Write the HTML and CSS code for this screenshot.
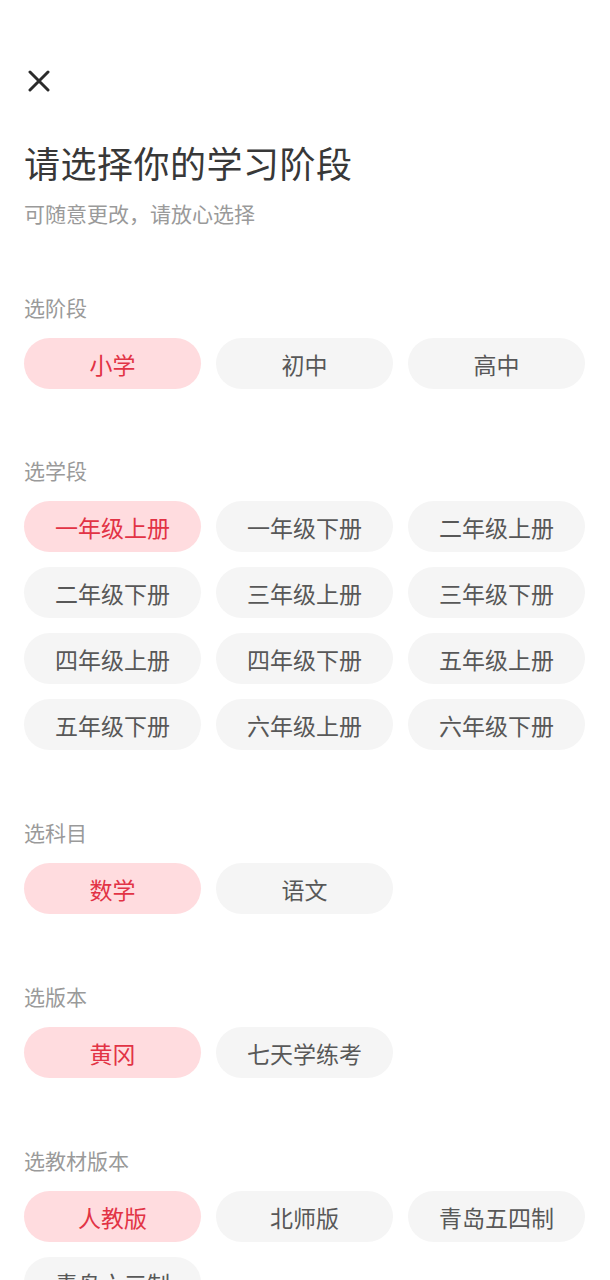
FILE: index.html
```html
<!DOCTYPE html>
<html lang="zh-CN">
<head>
<meta charset="utf-8">
<title>选择学习阶段</title>
<link rel="stylesheet" href="styles.css">
</head>
<body>
<div class="page">
  <div class="close">
    <svg width="22" height="22" viewBox="0 0 22 22"><path d="M2 2 L20 20 M20 2 L2 20" stroke="#2b2b2b" stroke-width="3" stroke-linecap="round" fill="none"/></svg>
  </div>
  <h1 class="title">请选择你的学习阶段</h1>
  <p class="subtitle">可随意更改，请放心选择</p>

  <section class="section first">
    <div class="label">选阶段</div>
    <div class="grid">
      <div class="chip active">小学</div>
      <div class="chip">初中</div>
      <div class="chip">高中</div>
    </div>
  </section>

  <section class="section second">
    <div class="label">选学段</div>
    <div class="grid">
      <div class="chip active">一年级上册</div>
      <div class="chip">一年级下册</div>
      <div class="chip">二年级上册</div>
      <div class="chip">二年级下册</div>
      <div class="chip">三年级上册</div>
      <div class="chip">三年级下册</div>
      <div class="chip">四年级上册</div>
      <div class="chip">四年级下册</div>
      <div class="chip">五年级上册</div>
      <div class="chip">五年级下册</div>
      <div class="chip">六年级上册</div>
      <div class="chip">六年级下册</div>
    </div>
  </section>

  <section class="section">
    <div class="label">选科目</div>
    <div class="grid">
      <div class="chip active">数学</div>
      <div class="chip">语文</div>
    </div>
  </section>

  <section class="section">
    <div class="label">选版本</div>
    <div class="grid">
      <div class="chip active">黄冈</div>
      <div class="chip">七天学练考</div>
    </div>
  </section>

  <section class="section">
    <div class="label">选教材版本</div>
    <div class="grid">
      <div class="chip active">人教版</div>
      <div class="chip">北师版</div>
      <div class="chip">青岛五四制</div>
      <div class="chip">青岛六三制</div>
    </div>
  </section>
</div>
</body>
</html>
```

FILE: styles.css
```css
html, body {
  margin: 0;
  padding: 0;
  background: #ffffff;
}
body {
  font-family: "Noto Sans CJK SC", "Noto Sans", sans-serif;
  color: #333333;
}
.page {
  padding: 70px 25px 40px 24px;
}
.close {
  width: 22px;
  height: 22px;
  margin-left: 4px;
}
.close svg {
  display: block;
}
.title {
  margin: 46px 0 0 0;
  font-size: 36px;
  line-height: 48px;
  font-weight: 400;
  letter-spacing: 0.5px;
  color: #383838;
}
.subtitle {
  margin: 13px 0 0 0;
  font-size: 21px;
  line-height: 28px;
  color: #9a9a9a;
}
.section {
  margin-top: 68px;
}
.section.first {
  margin-top: 66px;
}
.section.second {
  margin-top: 67px;
}
.label {
  font-size: 21px;
  line-height: 28px;
  color: #9a9a9a;
}
.grid {
  margin-top: 17px;
  display: grid;
  grid-template-columns: repeat(3, 1fr);
  column-gap: 15px;
  row-gap: 15px;
}
.chip {
  height: 51px;
  border-radius: 26px;
  background: #f5f5f5;
  color: #585858;
  font-size: 23px;
  display: flex;
  align-items: center;
  justify-content: center;
}
.chip.active {
  background: #ffdcdf;
  color: #e23345;
}
```
